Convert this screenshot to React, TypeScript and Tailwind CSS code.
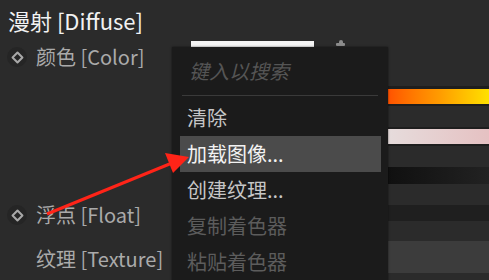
import React from "react";

const font = { fontFamily: '"Noto Sans CJK SC", "Noto Sans", sans-serif' };

function Diamond() {
  return (
    <div className="w-[20px] h-[20px] rounded-full bg-[#252525] flex items-center justify-center">
      <div className="w-[9px] h-[9px] rotate-45 border-2 border-[#a8a8a8] rounded-[1px]" />
    </div>
  );
}

function Row({ diamond, label, className }: { diamond?: boolean; label: string; className: string }) {
  return (
    <div className={"shrink-0 flex items-center " + className}>
      <div className="w-[36px] pl-[7px]">{diamond && <Diamond />}</div>
      <span className="text-[20px] text-[#aaaaaa] leading-none">{label}</span>
    </div>
  );
}

const items = [
  { label: "清除", state: "normal" },
  { label: "加载图像...", state: "active" },
  { label: "创建纹理...", state: "normal" },
  { label: "复制着色器", state: "disabled" },
  { label: "粘贴着色器", state: "disabled" },
];

export default function App() {
  return (
    <div className="relative w-[489px] h-[280px] bg-[#2b2b2b] overflow-hidden" style={font}>
      <div className="flex h-full">
        {/* labels */}
        <div className="w-[388px] flex flex-col">
          <div className="shrink-0 h-[40px] flex items-center pl-[8px] text-[22px] text-[#f2f2f2] leading-none">
            漫射 [Diffuse]
          </div>
          <div className="relative shrink-0">
            <Row diamond label="颜色 [Color]" className="h-[34px]" />
            <div className="absolute left-[191px] top-[1px] w-[123px] h-[8px] bg-[#f4f4f4]" />
            <div className="absolute left-[336px] top-[0px] w-[9px] h-[6px]">
              <div className="ml-[3px] w-[4px] h-[3px] rounded-t-full bg-[#8c8c8c]" />
              <div className="w-[9px] h-[3px] rounded-[1px] bg-[#8c8c8c]" />
            </div>
          </div>
          <div className="shrink-0 h-[125px]" />
          <Row diamond label="浮点 [Float]" className="h-[32px]" />
          <Row label="纹理 [Texture]" className="h-[55px]" />
        </div>

        {/* value strips */}
        <div className="flex-1 flex flex-col">
          <div className="h-[86px]" />
          <div className="h-[3px] bg-[#1e1e1e]" />
          <div className="h-[15px] bg-gradient-to-r from-[#ff5200] via-[#ff9a00] to-[#ffe100]" />
          <div className="h-[2px] bg-[#1e1e1e]" />
          <div className="h-[21px]" />
          <div className="h-[2px] bg-[#1e1e1e]" />
          <div className="h-[15px] bg-gradient-to-r from-[#e6dcdc] to-[#e5c1c2]" />
          <div className="h-[2px] bg-[#1e1e1e]" />
          <div className="h-[21px]" />
          <div className="h-[17px] bg-gradient-to-r from-[#101010] to-[#222222]" />
          <div className="h-[21px]" />
          <div className="h-[16px] bg-[#1f1f1f]" />
          <div className="h-[20px]" />
          <div className="h-[32px] bg-[#3c3c3c]" />
        </div>
      </div>

      {/* context menu */}
      <div className="absolute left-[172px] top-[47px] w-[216px] h-[240px] bg-[#1b1b1b] shadow-[0_0_2px_rgba(0,0,0,0.6)] flex flex-col">
        <div className="h-[48px] flex items-center pl-[17px] text-[20px] italic text-[#555555] leading-none">
          键入以搜索
        </div>
        <div className="mx-[10px] h-px bg-[#3a3a3a]" />
        <div className="flex flex-col mt-[4px] ml-[8px] mr-[7px]">
          {items.map((it) => (
            <div
              key={it.label}
              className={
                "h-[36px] flex items-center pl-[7px] text-[20px] leading-none " +
                (it.state === "active"
                  ? "bg-[#4b4b4b] text-[#f2f2f2]"
                  : it.state === "disabled"
                  ? "text-[#5c5c5c]"
                  : "text-[#c6c6c6]")
              }
            >
              {it.label}
            </div>
          ))}
        </div>
      </div>

      {/* annotation arrow */}
      <svg className="absolute inset-0 pointer-events-none" width="489" height="280">
        <line x1="47" y1="214" x2="172" y2="163" stroke="#ff2418" strokeWidth="3" />
        <polygon points="189,157 165,153 173,173" fill="#ff2418" />
      </svg>
    </div>
  );
}
